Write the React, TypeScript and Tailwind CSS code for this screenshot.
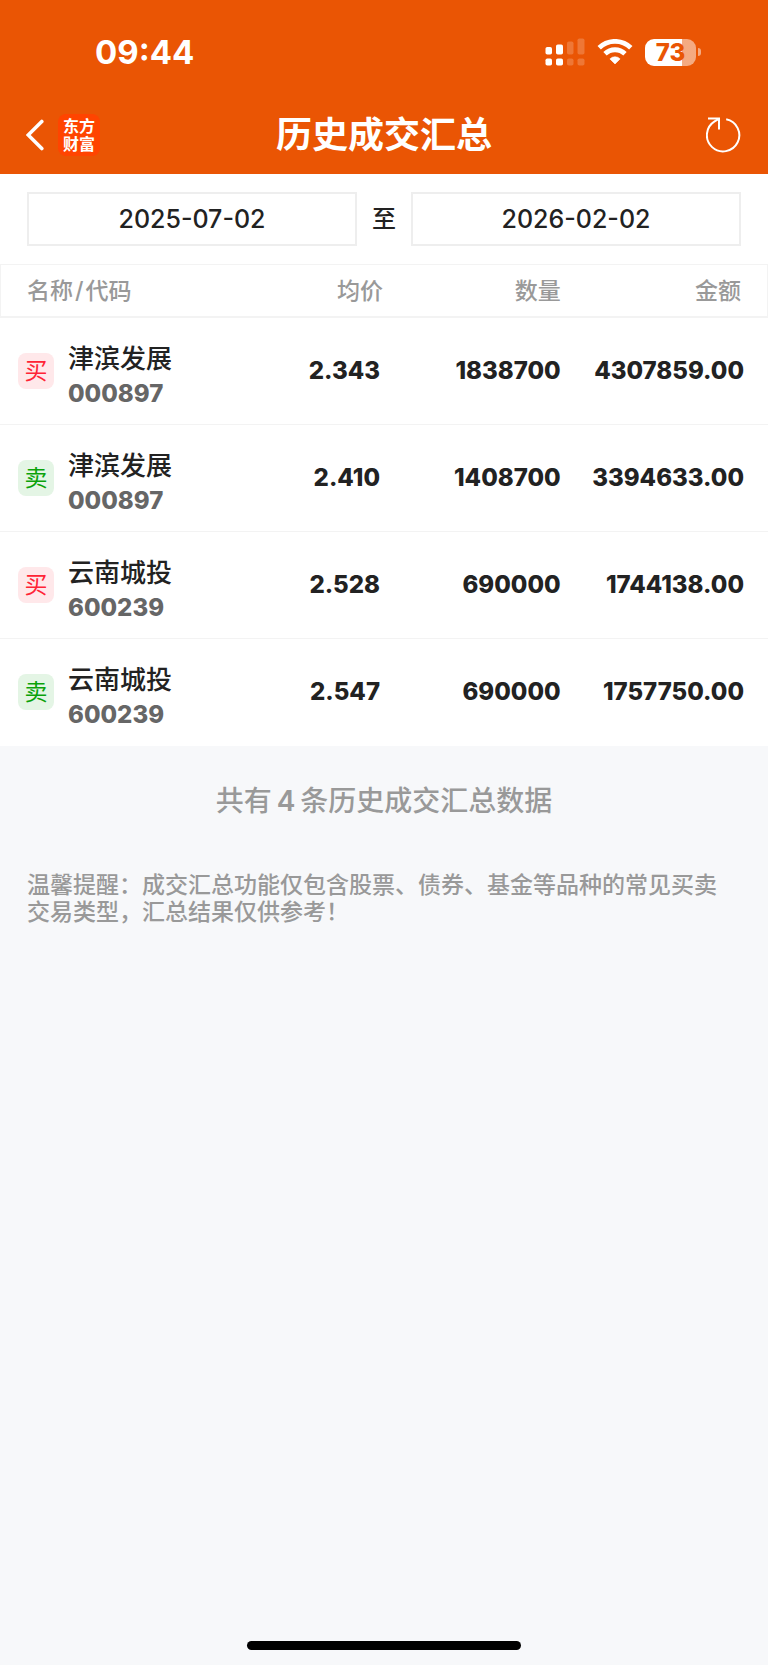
interface Trade {
  side: "buy" | "sell"
  name: string
  code: string
  price: string
  volume: string
  amount: string
}

const trades: Trade[] = [
  { side: "buy", name: "津滨发展", code: "000897", price: "2.343", volume: "1838700", amount: "4307859.00" },
  { side: "sell", name: "津滨发展", code: "000897", price: "2.410", volume: "1408700", amount: "3394633.00" },
  { side: "buy", name: "云南城投", code: "600239", price: "2.528", volume: "690000", amount: "1744138.00" },
  { side: "sell", name: "云南城投", code: "600239", price: "2.547", volume: "690000", amount: "1757750.00" },
]

function SignalIcon() {
  return (
    <svg width="40" height="28" viewBox="0 0 40 28" fill="white" aria-hidden="true">
      <rect x="0.5" y="9" width="6.5" height="7.5" rx="1.8" />
      <rect x="11" y="6.5" width="7" height="10" rx="1.8" />
      <rect x="22" y="3.5" width="6.5" height="13" rx="1.8" opacity="0.2" />
      <rect x="32.5" y="0.5" width="7" height="16" rx="1.8" opacity="0.2" />
      <rect x="0.5" y="20.5" width="6.5" height="7" rx="1.8" />
      <rect x="11" y="20.5" width="7" height="7" rx="1.8" />
      <rect x="22" y="20.5" width="6.5" height="7" rx="1.8" opacity="0.2" />
      <rect x="32.5" y="20.5" width="7" height="7" rx="1.8" opacity="0.2" />
    </svg>
  )
}

function WifiIcon() {
  return (
    <svg width="36" height="26" viewBox="0 0 36 26" aria-hidden="true">
      <g fill="none" stroke="white" strokeWidth="4.8">
        <path d="M2.2 8.8A22.6 22.6 0 0 1 33.8 8.8" />
        <path d="M8 14.8A14.4 14.4 0 0 1 28 14.8" />
      </g>
      <path d="M18 25l-5.1-5.1a7.2 7.2 0 0 1 10.2 0z" fill="white" stroke="white" strokeWidth="0.6" strokeLinejoin="round" />
    </svg>
  )
}

function Battery() {
  return (
    <div className="flex items-center gap-0.5">
      <div className="flex h-[27px] w-[51px] items-center justify-center rounded-[9px] bg-linear-to-r from-white from-73% to-white/50 to-73% pt-px text-2xl leading-none font-extrabold text-[#ea5504]">
        73
      </div>
      <div className="h-2 w-[3px] rounded-r-full bg-white/50" />
    </div>
  )
}

export default function App() {
  return (
    <div className="flex min-h-screen flex-col bg-[#f7f8fa] font-['Inter','Noto_Sans_CJK_SC',sans-serif] text-[#222]">
      <header className="bg-[#ea5504] pb-2 text-white">
        {/* Status bar */}
        <div className="flex h-[104px] items-center justify-between pr-[67px] pl-[95px]">
          <span className="text-[33px] leading-none font-bold">09:44</span>
          <div className="flex items-center gap-3">
            <SignalIcon />
            <WifiIcon />
            <Battery />
          </div>
        </div>

        {/* Navigation */}
        <nav className="grid h-[62px] grid-cols-[1fr_auto_1fr] items-center px-[26px]">
          <div className="flex items-center gap-3">
            <button type="button" aria-label="返回">
              <svg width="20" height="32" viewBox="0 0 20 32" fill="none" stroke="white" strokeWidth="3.6" strokeLinecap="round" aria-hidden="true">
                <path d="M15.8 2.4L2.2 16l13.6 13.6" />
              </svg>
            </button>
            <a href="#" className="flex size-[42px] items-center justify-center rounded-lg bg-[#ff4400] text-center text-base leading-[18px] font-bold">
              东方
              <br />
              财富
            </a>
          </div>
          <h1 className="text-4xl leading-none font-bold">历史成交汇总</h1>
          <button type="button" aria-label="刷新" className="justify-self-end">
            <svg width="36" height="36" viewBox="0 0 36 36" fill="none" stroke="white" strokeWidth="2" aria-hidden="true">
              <path d="M20.2 2.3A16.2 16.2 0 1 1 8.6 4.4L12.8 1.8" />
              <path d="M2 1.4H13V12.4" />
            </svg>
          </button>
        </nav>
      </header>

      <main>
        {/* Date range */}
        <div className="flex items-center bg-white px-[27px] py-[18px] text-[25px] leading-none font-medium">
          <button type="button" aria-label="开始日期" className="h-[54px] flex-1 border-2 border-[#eee]">
            2025-07-02
          </button>
          <span className="w-[54px] text-center text-2xl leading-none">至</span>
          <button type="button" aria-label="结束日期" className="h-[54px] flex-1 border-2 border-[#eee]">
            2026-02-02
          </button>
        </div>

        <table className="w-full table-fixed border-separate border-spacing-0 bg-white">
          <thead>
            <tr className="h-[54px] text-right text-[23px] leading-none text-[#999] *:border-t *:border-b-2 *:border-[#f3f3f3] *:pt-0.5 *:font-medium">
              <th className="w-1/4 border-l pl-[26px] text-left">
                名称<span className="px-0.5">/</span>代码
              </th>
              <th className="w-1/4 pr-px">均价</th>
              <th className="w-[23%]">数量</th>
              <th className="w-[27%] border-r pr-[26px]">金额</th>
            </tr>
          </thead>
          <tbody>
            {trades.map((trade) => (
              <tr
                key={`${trade.code}-${trade.side}`}
                className="h-[107px] text-right text-2xl font-extrabold *:border-b *:border-[#f3f3f3] last:*:border-white"
              >
                <td className="pl-[18px] text-left">
                  <div className="flex items-center gap-[14px]">
                    <span
                      className={`flex size-9 items-center justify-center rounded-lg text-[23px] leading-none font-normal ${
                        trade.side === "buy" ? "bg-[#ffe8ea] text-[#ff2436]" : "bg-[#e4f5e5] text-[#0aa20a]"
                      }`}
                    >
                      {trade.side === "buy" ? "买" : "卖"}
                    </span>
                    <div className="pt-2.5">
                      <div className="text-[26px] leading-[35px] font-medium">{trade.name}</div>
                      <div className="leading-9 text-[#666]">{trade.code}</div>
                    </div>
                  </div>
                </td>
                <td className="pr-1">{trade.price}</td>
                <td>{trade.volume}</td>
                <td className="pr-6">{trade.amount}</td>
              </tr>
            ))}
          </tbody>
        </table>

        <div className="font-medium text-[#999]">
          <p className="pt-9 text-center text-[28px] leading-[38px]">
            共有<span className="px-[5px] font-semibold">4</span>条历史成交汇总数据
          </p>
          <p className="pt-[52px] pr-9 pl-[27px] text-[23px] leading-[27px]">
            温馨提醒：成交汇总功能仅包含股票、债券、基金等品种的常见买卖交易类型，汇总结果仅供参考！
          </p>
        </div>
      </main>

      {/* Home indicator */}
      <div className="mx-auto mt-auto mb-[15px] h-[9px] w-[274px] rounded-full bg-black" />
    </div>
  )
}
